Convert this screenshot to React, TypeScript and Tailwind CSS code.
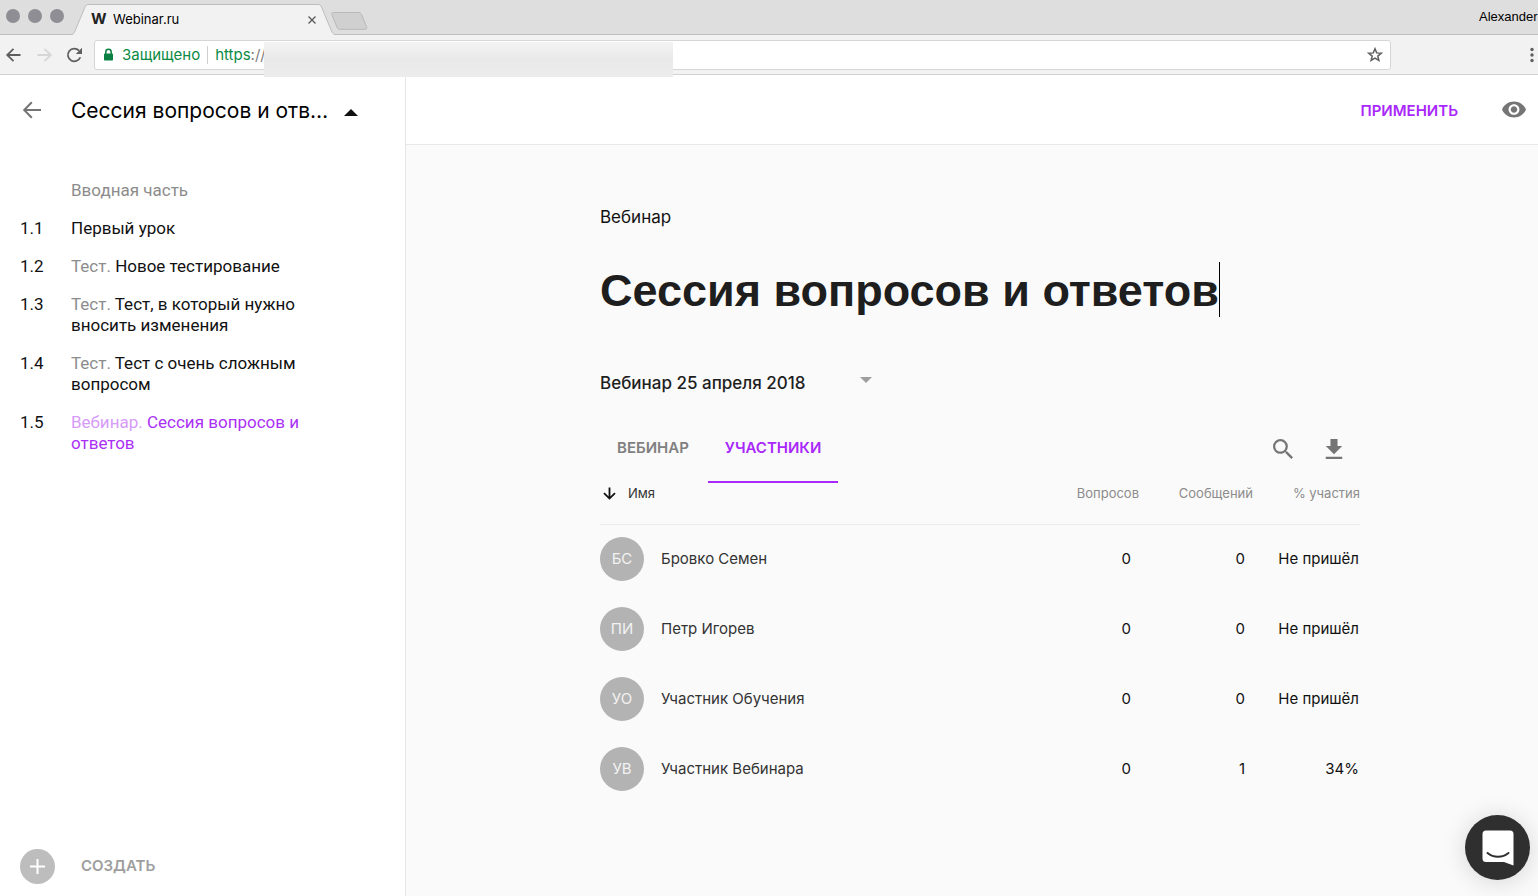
import React, { useState } from 'react';

interface Lesson {
  number: string;
  kind?: string;
  title: string;
  active?: boolean;
}

interface Participant {
  initials: string;
  name: string;
  questions: number;
  messages: number;
  attendance: string;
}

const LESSONS: Lesson[] = [
  { number: '1.1', title: 'Первый урок' },
  { number: '1.2', kind: 'Тест.', title: 'Новое тестирование' },
  { number: '1.3', kind: 'Тест.', title: 'Тест, в который нужно вносить изменения' },
  { number: '1.4', kind: 'Тест.', title: 'Тест с очень сложным вопросом' },
  { number: '1.5', kind: 'Вебинар.', title: 'Сессия вопросов и ответов', active: true },
];

const PARTICIPANTS: Participant[] = [
  { initials: 'БС', name: 'Бровко Семен', questions: 0, messages: 0, attendance: 'Не пришёл' },
  { initials: 'ПИ', name: 'Петр Игорев', questions: 0, messages: 0, attendance: 'Не пришёл' },
  { initials: 'УО', name: 'Участник Обучения', questions: 0, messages: 0, attendance: 'Не пришёл' },
  { initials: 'УВ', name: 'Участник Вебинара', questions: 0, messages: 1, attendance: '34%' },
];

const TabStrip = () => (
  <div className="flex h-[35px] items-end overflow-hidden bg-[#dedede] shadow-[inset_0_-1px_0_#bdbdbd]">
    <div className="flex h-full w-[72px] shrink-0 gap-2 pt-[9px] pl-[6px]">
      <span className="size-[14px] rounded-full bg-[#8f8e95]" />
      <span className="size-[14px] rounded-full bg-[#8f8e95]" />
      <span className="size-[14px] rounded-full bg-[#8f8e95]" />
    </div>
    <div className="relative h-[31px] w-[263px] shrink-0">
      <svg className="absolute inset-0" width="263" height="31" viewBox="0 0 263 31" aria-hidden="true">
        <path
          d="M0 30.500 L0 31 H263 V30.500 C261 30 260.500 29 259.500 27 L249.500 3 C248.700 1.200 248 .500 246 .500 H16.500 C14.500 .500 13.800 1.200 13 3 L3 27 C2.200 29 1.500 30 0 30.500 Z"
          fill="#f2f2f2"
        />
        <path
          d="M0 30.500 C1.500 30 2.200 29 3 27 L13 3 C13.800 1.200 14.500 .500 16.500 .500 H246 C248 .500 248.700 1.200 249.500 3 L259.500 27 C260.500 29 261 30 263 30.500"
          fill="none"
          stroke="#bdbdbd"
        />
      </svg>
      <div className="relative flex h-full items-center pr-[17px] pl-[19px] text-[13px] text-black">
        <span className="w-[22px] text-[15px] font-bold text-[#222]">W</span>
        <span className="flex-1">Webinar.ru</span>
        <button type="button" aria-label="Закрыть вкладку">
          <svg width="12" height="12" viewBox="0 0 12 12" fill="none" stroke="#5a5a5a" strokeWidth="1.300">
            <path d="M2.500 2.500 9.500 9.500 M9.500 2.500 2.500 9.500" />
          </svg>
        </button>
      </div>
    </div>
    <button type="button" aria-label="Новая вкладка" className="-ml-1 self-start pt-3">
      <svg width="37" height="18" viewBox="0 0 37 18">
        <path
          d="M2.500 .500 H27 C29 .500 29.800 1 30.500 2.600 L35.500 14.500 C36.200 16.300 35.800 17.300 34 17.300 H9.500 C7.500 17.300 6.600 16.800 6 15.300 L1 3 C.500 1.500 .800 .500 2.500 .500 Z"
          fill="#d0d0d0"
          stroke="#b9b9b9"
        />
      </svg>
    </button>
    <span className="ml-auto w-[59px] shrink-0 self-start overflow-hidden pt-2 text-[13px] leading-[18px] whitespace-nowrap text-black font-['Liberation_Sans',sans-serif]">
      Alexander
    </span>
  </div>
);

const Toolbar = () => (
  <div className="flex h-10 items-center border-b border-[#d2d2d2] bg-[#f2f2f2]">
    <div className="flex w-[94px] shrink-0 items-center justify-between pr-[11px] pl-[5px]">
      <button type="button" aria-label="Назад">
        <svg width="17" height="16" viewBox="0 0 17 16" fill="none" stroke="#5f5f5f" strokeWidth="1.800">
          <path d="M15.500 8 H2.500 M8.500 1.800 2.200 8 8.500 14.200" />
        </svg>
      </button>
      <button type="button" aria-label="Вперёд" disabled>
        <svg width="17" height="16" viewBox="0 0 17 16" fill="none" stroke="#d6d6d6" strokeWidth="1.800">
          <path d="M1.500 8 H14.500 M8.500 1.800 14.800 8 8.500 14.200" />
        </svg>
      </button>
      <button type="button" aria-label="Обновить">
        <svg width="17" height="16" viewBox="0 0 17 16" fill="none">
          <path d="M14.300 10.200 A6.400 6.400 0 1 1 13 3.600" stroke="#5f5f5f" strokeWidth="1.800" />
          <path d="M16 .800 V7 H9.800 Z" fill="#5f5f5f" />
        </svg>
      </button>
    </div>
    <div className="relative flex h-[30px] flex-1 items-center rounded-[3px] border border-[#d6d6d6] bg-white pt-px pl-2 text-[15px]">
      <svg className="mr-2" width="11" height="14" viewBox="0 0 11 14">
        <path d="M2.800 7 V4 a2.700 2.700 0 0 1 5.400 0 V7" fill="none" stroke="#0b8043" strokeWidth="1.500" />
        <rect x="1" y="5.600" width="9" height="7" rx=".800" fill="#0b8043" />
      </svg>
      <span className="text-[#0b8a43]">Защищено</span>
      <span className="mx-[7px] h-[18px] w-px bg-[#cfcfcf]" />
      <label htmlFor="address" className="text-[#0b8a43]">
        https<span className="text-[#808080]">://</span>
      </label>
      <input id="address" type="text" className="h-full min-w-0 flex-1 bg-transparent outline-none" />
      <button type="button" aria-label="В закладки" className="mr-[7px]">
        <svg width="16" height="16" viewBox="0 0 16 16" fill="none" stroke="#5f5f5f" strokeWidth="1.500">
          <path d="M8 1.800 9.700 5.900 14.200 6.200 10.800 9.100 11.900 13.500 8 11.100 4.100 13.500 5.200 9.100 1.800 6.200 6.300 5.900 Z" />
        </svg>
      </button>
      {/* Hidden part of the address */}
      <div className="absolute top-px left-[169px] h-[35px] w-[409px] bg-linear-to-b from-[#f3f3f3] via-[#e9e9e9] to-[#ececec]" />
    </div>
    <div className="flex w-[147px] shrink-0 justify-end pr-1">
      <button type="button" aria-label="Меню">
        <svg width="4" height="16" viewBox="0 0 4 16" fill="#5f5f5f">
          <circle cx="2" cy="2.500" r="1.700" />
          <circle cx="2" cy="8" r="1.700" />
          <circle cx="2" cy="13.500" r="1.700" />
        </svg>
      </button>
    </div>
  </div>
);

const Sidebar = () => (
  <aside className="flex w-[406px] shrink-0 flex-col border-r border-[#e6e6e6] bg-white">
    <div className="flex h-[71px] items-center pl-[22px]">
      <button type="button" aria-label="Назад к курсу" className="mr-[29px] pb-[2px]">
        <svg width="20" height="18" viewBox="0 0 20 18" fill="none" stroke="#757575" strokeWidth="2">
          <path d="M19 9 H2.500 M9.800 1.200 2.200 9 9.800 16.800" />
        </svg>
      </button>
      <h2 className="text-[21px] leading-7 text-black">Сессия вопросов и отв…</h2>
      <button type="button" aria-label="Свернуть" className="ml-4 pt-1">
        <svg width="14" height="7" viewBox="0 0 14 7">
          <path d="M7 0 14 7 H0 Z" fill="#111" />
        </svg>
      </button>
    </div>

    <nav className="flex flex-1 flex-col gap-[17px] pt-[34px] pr-20 text-[17px] leading-[21px] font-['Roboto',sans-serif]">
      <p className="pl-[71px] text-[#8c8c8c]">Вводная часть</p>
      {LESSONS.map((lesson) => (
        <a key={lesson.number} href="#" className="flex pl-5 text-[#111]">
          <span className="w-[51px] shrink-0">{lesson.number}</span>
          <span className={lesson.active ? 'text-[#ab30f5]' : ''}>
            {lesson.kind && (
              <span className={lesson.active ? 'text-[#d79bf8]' : 'text-[#8c8c8c]'}>{lesson.kind} </span>
            )}
            {lesson.title}
          </span>
        </a>
      ))}
    </nav>

    <button type="button" className="flex items-center gap-[26px] pb-3 pl-5 text-[15px] font-semibold text-[#9e9e9e]">
      <span className="flex size-[35px] items-center justify-center rounded-full bg-[#bdbdbd]">
        <svg width="17" height="17" viewBox="0 0 17 17" stroke="#fff" strokeWidth="2">
          <path d="M8.500 1 V16 M1 8.500 H16" />
        </svg>
      </span>
      СОЗДАТЬ
    </button>
  </aside>
);

const ParticipantsTable = () => (
  <table className="w-full table-fixed text-[15px]">
    <colgroup>
      <col />
      <col className="w-[120px]" />
      <col className="w-[114px]" />
      <col className="w-[107px]" />
    </colgroup>
    <thead>
      <tr className="h-[41px] border-b border-[#ececec] text-right align-top text-[13px] leading-5 text-[#8c8c8c]">
        <th className="text-left font-normal text-[#333]">
          <button type="button" className="flex items-center gap-3 pl-[3px]">
            <svg width="13" height="13" viewBox="0 0 13 13" fill="none" stroke="#111" strokeWidth="1.800">
              <path d="M6.500 .500 V11.500 M1 6.200 6.500 11.600 12 6.200" />
            </svg>
            Имя
          </button>
        </th>
        <th className="font-normal">Вопросов</th>
        <th className="font-normal">Сообщений</th>
        <th className="font-normal">% участия</th>
      </tr>
    </thead>
    <tbody>
      {PARTICIPANTS.map((person) => (
        <tr key={person.name} className="h-[70px] text-right text-[#111]">
          <td>
            <div className="flex items-center gap-[17px] text-[#333]">
              <span className="flex size-11 items-center justify-center rounded-full bg-[#b3b3b3] text-[#f2f2f2]">
                {person.initials}
              </span>
              {person.name}
            </div>
          </td>
          <td className="pr-2">{person.questions}</td>
          <td className="pr-2">{person.messages}</td>
          <td className="pr-px whitespace-nowrap">{person.attendance}</td>
        </tr>
      ))}
    </tbody>
  </table>
);

const App: React.FC = () => {
  const [title, setTitle] = useState('Сессия вопросов и ответов');

  return (
    <div className="flex min-h-screen flex-col overflow-hidden bg-white font-['Inter',sans-serif]">
      <TabStrip />
      <Toolbar />

      <div className="flex flex-1">
        <Sidebar />

        <div className="flex min-w-0 flex-1 flex-col bg-[#fafafa]">
          <header className="flex h-[70px] items-center justify-end gap-11 border-b border-[#e8e8e8] bg-white pr-3">
            <button type="button" className="pt-1 text-[15px] font-semibold text-[#a928fb]">
              ПРИМЕНИТЬ
            </button>
            <button type="button" aria-label="Просмотр">
              <svg width="24" height="17" viewBox="1 4 22 16" preserveAspectRatio="none" fill="#757575">
                <path d="M12 4.500C7 4.500 2.730 7.610 1 12c1.730 4.390 6 7.500 11 7.500s9.270-3.110 11-7.500c-1.730-4.390-6-7.500-11-7.500zM12 17c-2.760 0-5-2.240-5-5s2.240-5 5-5 5 2.240 5 5-2.240 5-5 5zm0-8c-1.660 0-3 1.340-3 3s1.340 3 3 3 3-1.340 3-3-1.340-3-3-3z" />
              </svg>
            </button>
          </header>

          <main className="flex-1 pt-[60px] pl-4">
            <div className="mx-auto w-full max-w-[760px]">
              <label htmlFor="title" className="block text-[17px] leading-6 text-[#111]">
                Вебинар
              </label>
              <input
                id="title"
                type="text"
                value={title}
                onChange={(e) => setTitle(e.target.value)}
                className="mt-[33px] block h-[55px] field-sizing-content border-r border-black bg-transparent pt-[2px] text-[45px] font-bold text-[#1e1e1e] outline-none font-['Liberation_Sans',sans-serif]"
              />

              <div className="relative mt-[52px] w-[276px]">
                <select
                  aria-label="Дата вебинара"
                  className="h-[29px] w-full appearance-none bg-transparent text-[17px] font-medium text-[#1e1e1e] outline-none"
                >
                  <option>Вебинар 25 апреля 2018</option>
                </select>
                <svg className="pointer-events-none absolute top-2 right-1" width="12" height="6" viewBox="0 0 12 6">
                  <path d="M0 0 H12 L6 6 Z" fill="#9e9e9e" />
                </svg>
              </div>

              <div className="mt-4 flex h-[69px] items-stretch gap-[2px] text-[15px] font-semibold">
                <button type="button" className="border-y-2 border-transparent px-[17px] text-[#808080]">
                  ВЕБИНАР
                </button>
                <button type="button" className="border-y-2 border-t-transparent border-b-[#a928fb] px-[17px] text-[#a928fb]">
                  УЧАСТНИКИ
                </button>
                <div className="ml-auto flex items-center gap-8 pr-[17px]">
                  <button type="button" aria-label="Поиск">
                    <svg width="20" height="20" viewBox="3 3 17.500 17.500" fill="#757575">
                      <path d="M15.500 14h-.790l-.280-.270A6.471 6.471 0 0 0 16 9.500 6.500 6.500 0 1 0 9.500 16c1.610 0 3.090-.590 4.230-1.570l.270.280v.790l5 4.990L20.490 19l-4.990-5zm-6 0C7.010 14 5 11.990 5 9.500S7.010 5 9.500 5 14 7.010 14 9.500 11.990 14 9.500 14z" />
                    </svg>
                  </button>
                  <button type="button" aria-label="Скачать">
                    <svg width="18" height="20" viewBox="4.500 3 15 17" fill="#757575">
                      <path d="M19 9h-4V3H9v6H5l7 7 7-7zM5 18v2h14v-2H5z" />
                    </svg>
                  </button>
                </div>
              </div>

              <ParticipantsTable />
            </div>
          </main>
        </div>
      </div>

      <button
        type="button"
        aria-label="Открыть чат"
        className="fixed right-2 bottom-4 flex size-[65px] items-center justify-center rounded-full bg-[#2f2f2f] shadow-[0_2px_24px_rgba(0,0,0,0.15)]"
      >
        <svg width="32" height="36" viewBox="0 0 32 36">
          <path d="M4 .500 H28 A3.500 3.500 0 0 1 31.500 4 V35.500 L22 32 H4 A3.500 3.500 0 0 1 .500 28.500 V4 A3.500 3.500 0 0 1 4 .500 Z" fill="#fff" />
          <path d="M5.500 23 C11.500 28 20.500 28 26.500 23" fill="none" stroke="#2f2f2f" strokeWidth="2" strokeLinecap="round" />
        </svg>
      </button>
    </div>
  );
};

export default App;
